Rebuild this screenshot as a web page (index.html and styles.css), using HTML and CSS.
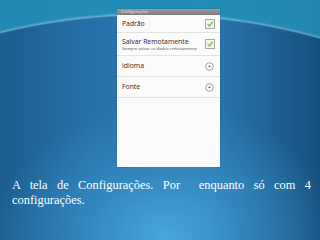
FILE: index.html
```html
<!DOCTYPE html>
<html lang="pt">
<head>
<meta charset="utf-8">
<link rel="stylesheet" href="styles.css">
</head>
<body>
<div class="slide">
  <div class="phone">
    <div class="titlebar">Configurações</div>
    <div class="row r1">
      <div class="label"><div class="title">Padrão</div></div>
      <span class="check"><svg viewBox="0 0 10 10" width="8" height="8"><path d="M2 5.2 L4.2 7.4 L8.4 2.2" fill="none" stroke="#7cc23a" stroke-width="1.6"/></svg></span>
    </div>
    <div class="row r2">
      <div class="label"><div class="title">Salvar Remotamente</div><div class="sub">Sempre salvar os dados remotamente</div></div>
      <span class="check"><svg viewBox="0 0 10 10" width="8" height="8"><path d="M2 5.2 L4.2 7.4 L8.4 2.2" fill="none" stroke="#7cc23a" stroke-width="1.6"/></svg></span>
    </div>
    <div class="row r3">
      <div class="label"><div class="title">idioma</div></div>
      <span class="drop"><svg viewBox="0 0 10 10" width="9" height="9"><circle cx="5" cy="5" r="4.2" fill="#fff" stroke="#8a8a8a" stroke-width="0.9"/><path d="M3.3 4.3 L6.7 4.3 L5 6.2 Z" fill="#555"/></svg></span>
    </div>
    <div class="row r3">
      <div class="label"><div class="title">Fonte</div></div>
      <span class="drop"><svg viewBox="0 0 10 10" width="9" height="9"><circle cx="5" cy="5" r="4.2" fill="#fff" stroke="#8a8a8a" stroke-width="0.9"/><path d="M3.3 4.3 L6.7 4.3 L5 6.2 Z" fill="#555"/></svg></span>
    </div>
  </div>
  <p class="caption">A tela de Configurações. Por &nbsp;enquanto só com 4 configurações.</p>
</div>
</body>
</html>
```
FILE: styles.css
```css
html, body {
  margin: 0;
  padding: 0;
}
body {
  width: 320px;
  height: 240px;
  overflow: hidden;
}
.slide {
  width: 320px;
  height: 240px;
  box-sizing: border-box;
  padding-top: 9px;
  display: flex;
  flex-direction: column;
  align-items: flex-start;
  background:
    radial-gradient(ellipse 611px 588px at 150px 600px, rgba(255,255,255,0) 99.3%, rgba(130,220,240,0.6) 99.6%, rgba(255,255,255,0) 100%),
    radial-gradient(ellipse 170px 130px at 165px 235px, rgba(72,168,222,0.95) 0%, rgba(60,150,205,0.6) 45%, rgba(40,120,180,0) 100%),
    radial-gradient(ellipse 611px 588px at 150px 600px, rgba(0,0,0,0) 99.6%, rgba(34,145,185,0.85) 100%),
    linear-gradient(90deg, #1c5e90 0%, #2772ab 30%, #2a78b2 65%, #17507f 100%);
}
.phone {
  margin-left: 117px;
  width: 103px;
  height: 158px;
  background: #fbfbfc;
  display: flex;
  flex-direction: column;
  font-family: "Noto Sans", "DejaVu Sans", sans-serif;
  color: #333;
  box-shadow: 0 0 1px rgba(0,0,0,0.3);
}
.titlebar {
  height: 6px;
  background: linear-gradient(#9a9a9a, #7a7a7a);
  color: #e8e8e8;
  font-size: 4px;
  line-height: 6px;
  padding-left: 4px;
}
.row {
  display: flex;
  align-items: center;
  justify-content: space-between;
  padding: 0 5px 0 5px;
  border-bottom: 1px solid #e2e2e2;
}
.r1 { height: 17px; }
.r2 { height: 22px; }
.r3 { height: 20px; }
.title {
  font-size: 6.8px;
  line-height: 8px;
}
.sub {
  font-size: 4.2px;
  line-height: 5px;
  color: #555;
}
.check {
  width: 8px;
  height: 8px;
  border: 1px solid #a8a8a8;
  background: #f4f4f4;
  display: flex;
  align-items: center;
  justify-content: center;
}
.drop {
  display: flex;
  width: 9px;
  height: 9px;
  margin-right: 1px;
}
.caption {
  margin: 11px 0 0 12px;
  width: 299px;
  font-family: "Liberation Serif", "DejaVu Serif", serif;
  font-size: 12.4px;
  line-height: 15px;
  color: #fff;
  text-align: justify;
}
```
